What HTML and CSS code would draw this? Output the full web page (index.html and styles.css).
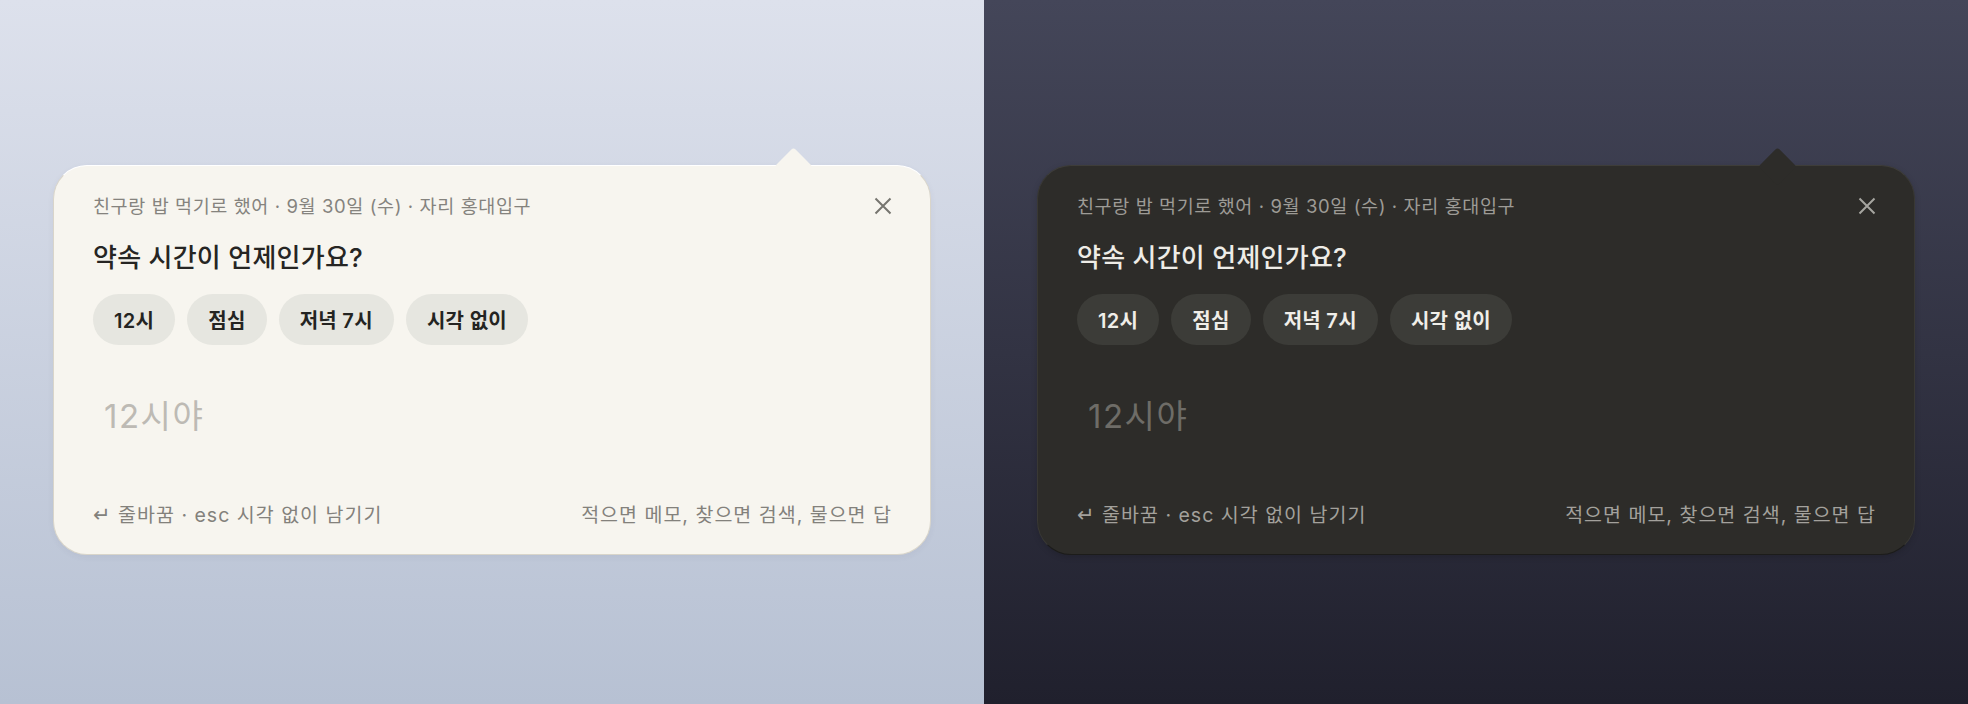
FILE: index.html
```html
<!DOCTYPE html>
<html lang="ko">
<head>
<meta charset="utf-8">
<title>약속 시간</title>
<link rel="stylesheet" href="styles.css">
</head>
<body>
<main class="stage">
  <section class="panel panel-light">
    <div class="card">
      <div class="card-head">
        <p class="meta">친구랑 밥 먹기로 했어 · 9월 30일 (수) · 자리 홍대입구</p>
        <button class="close" aria-label="닫기">
          <svg width="18" height="18" viewBox="0 0 18 18"><path d="M1.5 1.5 L16.5 16.5 M16.5 1.5 L1.5 16.5" /></svg>
        </button>
      </div>
      <h2 class="question">약속 시간이 언제인가요?</h2>
      <div class="chips">
        <span class="chip">12시</span>
        <span class="chip">점심</span>
        <span class="chip">저녁 7시</span>
        <span class="chip">시각 없이</span>
      </div>
      <div class="answer">12시야</div>
      <div class="card-foot">
        <span class="hint"><span class="ret">↵</span> 줄바꿈 · esc 시각 없이 남기기</span>
        <span class="hint">적으면 메모, 찾으면 검색, 물으면 답</span>
      </div>
    </div>
  </section>
  <section class="panel panel-dark">
    <div class="card">
      <div class="card-head">
        <p class="meta">친구랑 밥 먹기로 했어 · 9월 30일 (수) · 자리 홍대입구</p>
        <button class="close" aria-label="닫기">
          <svg width="18" height="18" viewBox="0 0 18 18"><path d="M1.5 1.5 L16.5 16.5 M16.5 1.5 L1.5 16.5" /></svg>
        </button>
      </div>
      <h2 class="question">약속 시간이 언제인가요?</h2>
      <div class="chips">
        <span class="chip">12시</span>
        <span class="chip">점심</span>
        <span class="chip">저녁 7시</span>
        <span class="chip">시각 없이</span>
      </div>
      <div class="answer">12시야</div>
      <div class="card-foot">
        <span class="hint"><span class="ret">↵</span> 줄바꿈 · esc 시각 없이 남기기</span>
        <span class="hint">적으면 메모, 찾으면 검색, 물으면 답</span>
      </div>
    </div>
  </section>
</main>
</body>
</html>
```

FILE: styles.css
```css
* { box-sizing: border-box; }
html, body { margin: 0; padding: 0; }
body {
  width: 1968px;
  height: 704px;
  overflow: hidden;
  font-family: "Inter", "Noto Sans CJK KR", sans-serif;
}
.stage {
  display: grid;
  grid-template-columns: 984px 984px;
  height: 704px;
}
.panel {
  padding: 165px 0 0 53px;
}
.panel-light { background: linear-gradient(180deg, #dde1ec 0%, #b7c1d3 100%); }
.panel-dark { background: linear-gradient(180deg, #444659 0%, #20202d 100%); }

.card {
  position: relative;
  width: 878px;
  height: 390px;
  border-radius: 34px;
  padding: 28px 38px 27px 39px;
  display: flex;
  flex-direction: column;
}
.card::before {
  content: "";
  position: absolute;
  left: 726px;
  top: -13px;
  width: 27px;
  height: 27px;
  transform: rotate(45deg);
  border-radius: 3px;
  background: inherit;
}
.panel-light .card {
  background: #f7f5ef;
  border: 1px solid #d9d5ca;
  border-top-color: #ffffff;
  box-shadow: 0 2px 6px rgba(60, 70, 100, 0.06);
}
.panel-dark .card {
  background: #2d2c29;
  border: 1px solid #1c1c1a;
  border-top-color: #3e3d39;
  border-left-color: #393834;
  border-right-color: #393834;
  box-shadow: 0 2px 6px rgba(0, 0, 0, 0.15);
}

.card-head {
  display: flex;
  justify-content: space-between;
  align-items: center;
  height: 24px;
}
.meta {
  margin: 0;
  font-size: 18.5px;
  line-height: 24px;
  letter-spacing: 0.6px;
}
.close {
  border: 0;
  padding: 0;
  background: none;
  width: 18px;
  height: 18px;
  display: flex;
}
.close svg path { fill: none; stroke-width: 2; }
.panel-light .close svg path { stroke: #76756f; }
.panel-dark .close svg path { stroke: #a6a5a0; }

.question {
  margin: 23px 0 0;
  font-size: 26px;
  line-height: 34px;
  font-weight: 500;
  letter-spacing: 0.25px;
}
.chips {
  margin-top: 19px;
  display: flex;
  gap: 12px;
}
.chip {
  height: 51px;
  padding: 0 21px;
  border-radius: 26px;
  display: flex;
  align-items: center;
  font-size: 20px;
  font-weight: 600;
  letter-spacing: 0.3px;
}
.answer {
  margin-top: 49px;
  padding-left: 11px;
  font-size: 33px;
  line-height: 44px;
  letter-spacing: 1.5px;
}
.card-foot {
  margin-top: auto;
  display: flex;
  justify-content: space-between;
  align-items: center;
  height: 24px;
}
.hint {
  font-size: 19.5px;
  line-height: 24px;
  letter-spacing: 1px;
}
.ret { font-family: "DejaVu Sans", sans-serif; font-size: 21px; }

.panel-light .meta { color: #85837e; }
.panel-light .question { color: #262523; }
.panel-light .chip { background: #e6e6e0; color: #242422; }
.panel-light .answer { color: #bdbab4; }
.panel-light .hint { color: #83817c; }

.panel-dark .meta { color: #9d9b96; }
.panel-dark .question { color: #eeece7; }
.panel-dark .chip { background: #3c3c38; color: #f0eee9; }
.panel-dark .answer { color: #6e6c67; }
.panel-dark .hint { color: #a3a19c; }
```
